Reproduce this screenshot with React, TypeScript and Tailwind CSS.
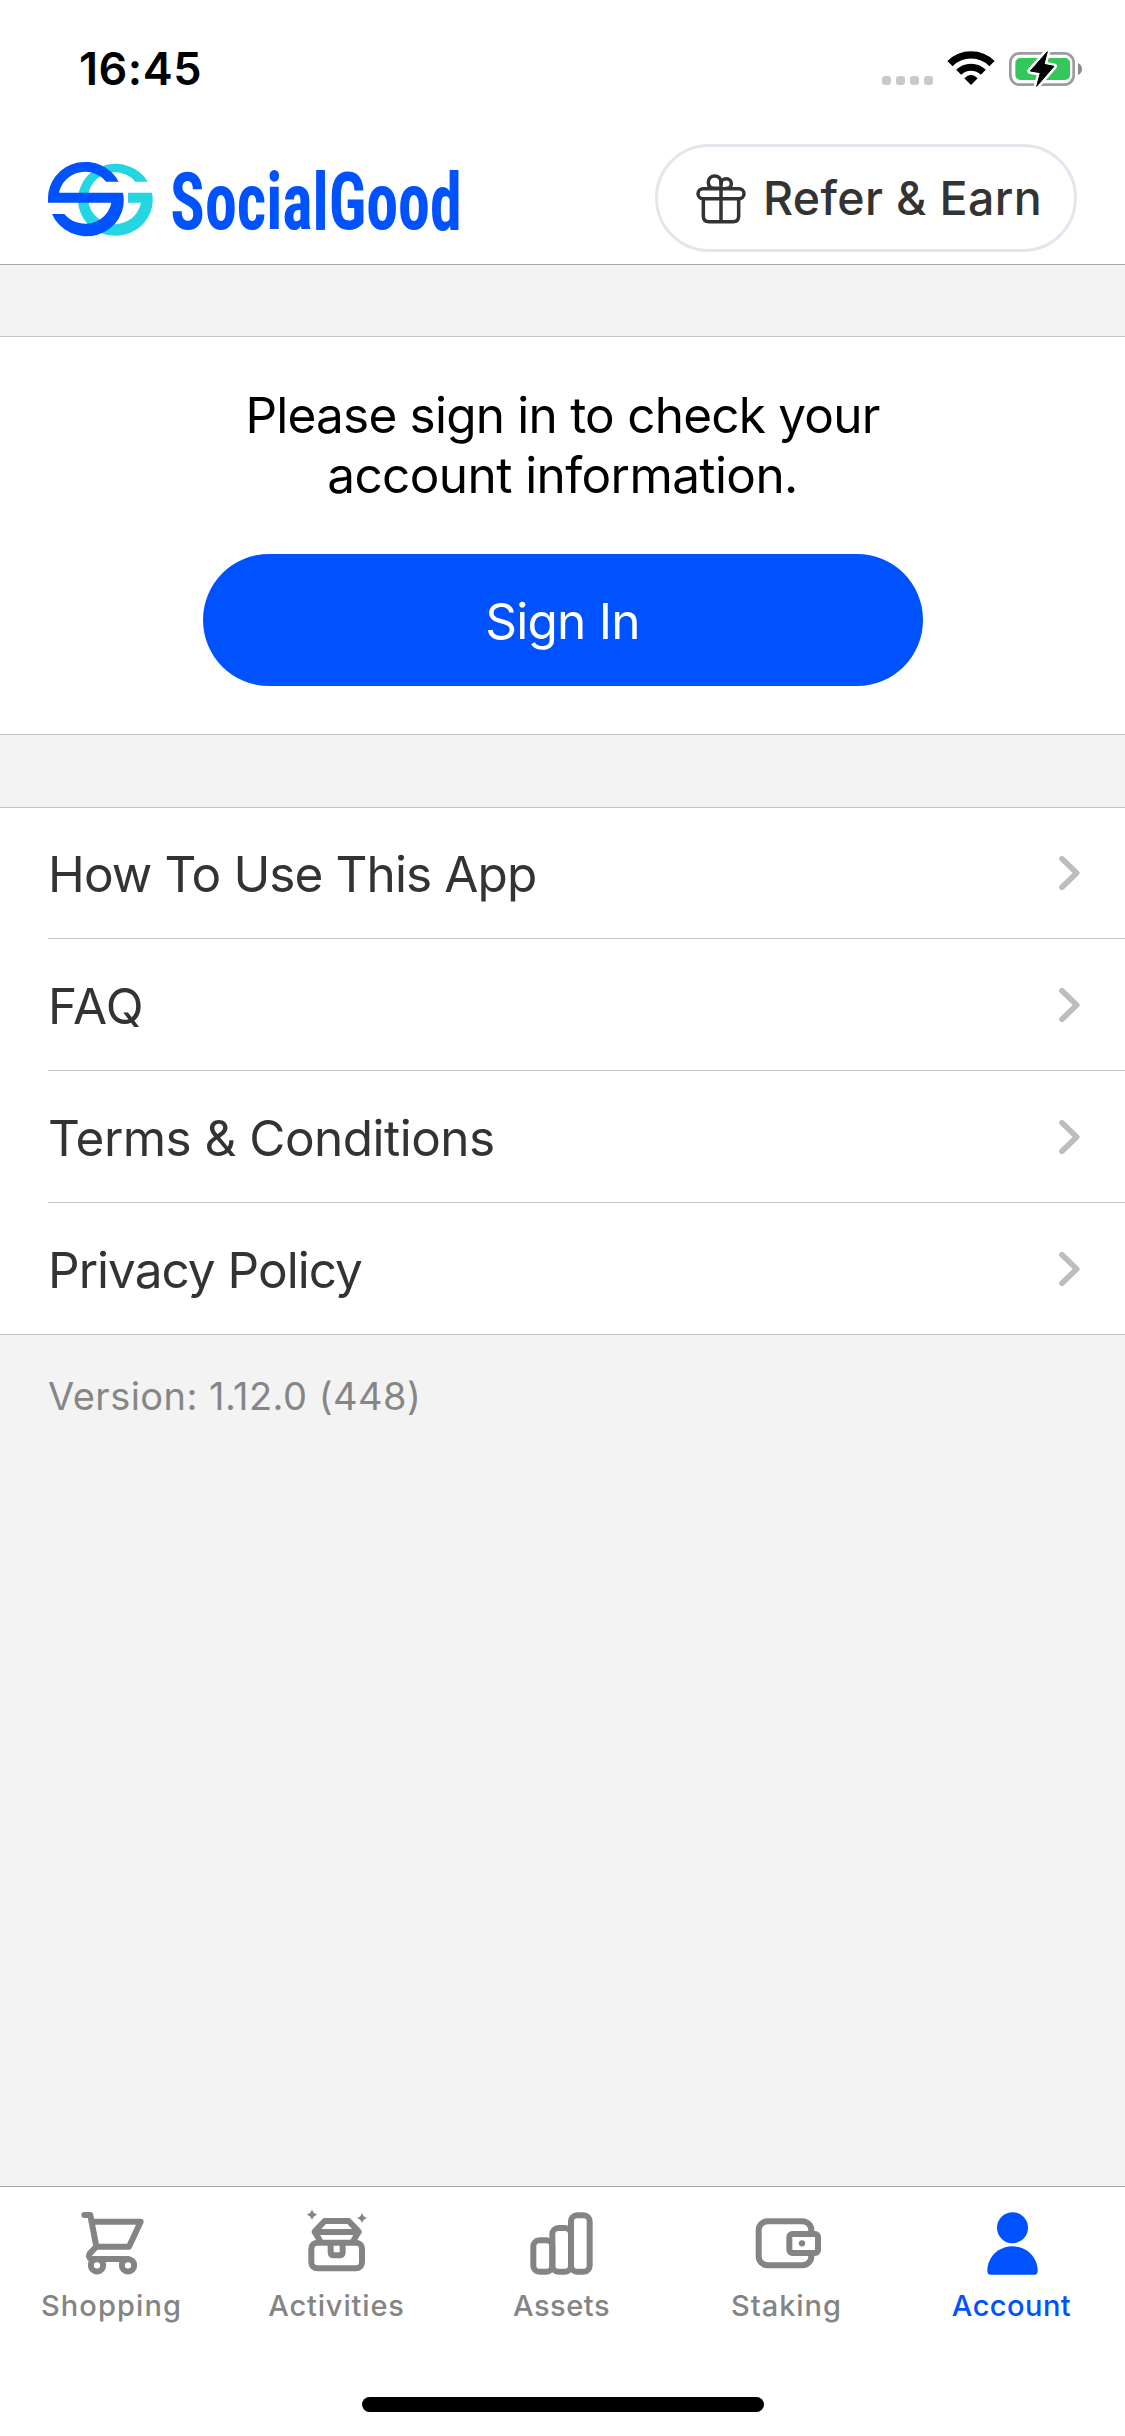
import React from 'react';

function StatusIcons() {
  return (
    <svg viewBox="60 51 615 129" className="w-[205px] h-[43px]">
      {[66, 108, 150, 192].map((x) => (
        <rect key={x} x={x} y="138" width="27" height="27" rx="9" fill="#c9c9c9" />
      ))}
      <path d="M270 101 A89 89 0 0 1 396 101" fill="none" stroke="#000" strokeWidth="22" />
      <path d="M296 127 A52 52 0 0 1 370 127" fill="none" stroke="#000" strokeWidth="21" />
      <path d="M333 165 L313 145 Q333 124 353 145 Z" fill="#000" />
      <rect x="451" y="70" width="190" height="94" rx="28" fill="none" stroke="#9c9c9c" strokeWidth="8" />
      <rect x="466" y="84" width="164" height="66" rx="15" fill="#34c759" />
      <path d="M654 99 Q666 105 666 117 Q666 129 654 135 Z" fill="#8c8c8c" />
      <path
        d="M562 65 L511 123 L541 128 L530 169 L582 109 L552 103 Z"
        fill="#000"
        stroke="#fff"
        strokeWidth="18"
        strokeLinejoin="round"
      />
      <path
        d="M562 65 L511 123 L541 128 L530 169 L582 109 L552 103 Z"
        fill="#000"
        stroke="#000"
        strokeWidth="3"
        strokeLinejoin="round"
      />
    </svg>
  );
}

function Logo() {
  return (
    <svg viewBox="54 60 1245 240" className="w-[415px] h-[80px] mt-1 overflow-visible">
      <path
        d="M353 125 A112 108 0 1 0 366 158 H294 V188 H333 A80 78 0 1 1 316 125 Z"
        fill="#23d6e2"
      />
      <path
        d="M266 125 A112 108 0 0 0 54 174 V188 H244 A80 78 0 0 1 103 222 H66 A112 108 0 0 0 279 158 H87 A80 78 0 0 1 228 125 Z"
        fill="#0052ff"
      />
      <text
        x="421"
        y="266"
        textLength="874"
        lengthAdjust="spacingAndGlyphs"
        fill="#0052ff"
        className="font-['Roboto_Condensed','Roboto',sans-serif] font-bold text-[238px]"
      >
        SocialGood
      </text>
    </svg>
  );
}

function GiftIcon() {
  return (
    <svg
      viewBox="165 120 156 165"
      className="w-[52px] h-[55px]"
      fill="none"
      stroke="#333"
      strokeWidth="10.5"
      strokeLinecap="round"
      strokeLinejoin="round"
    >
      <rect x="174" y="173" width="138" height="30" rx="15" />
      <path d="M190 204 V255 Q190 272 207 272 H279 Q296 272 296 255 V204" />
      <path d="M243 152 V271" />
      <path d="M243 172 H222 C211 172 205 165 205 154 C205 143 213 135 224 135 C236 135 243 143 243 154" />
      <path d="M243 158 C243 149 250 143 259 143 C268 143 274 150 274 158 C274 166 268 172 260 172" />
    </svg>
  );
}

function Chevron() {
  return (
    <svg viewBox="171 160 75 120" className="w-[25px] h-[40px]">
      <path
        d="M186 177 L230 220 L186 263"
        fill="none"
        stroke="#bdbdbd"
        strokeWidth="17"
        strokeLinecap="round"
        strokeLinejoin="round"
      />
    </svg>
  );
}

const stroke = {
  fill: 'none',
  stroke: 'currentColor',
  strokeWidth: 18,
  strokeLinecap: 'round',
  strokeLinejoin: 'round',
} as const;

function CartIcon() {
  return (
    <svg viewBox="225 75 225 225" className="size-[75px]" {...stroke}>
      <path d="M253 105 H271 L289 200" />
      <path d="M275 125 H422 L387 200 H289 L269 221 Q264 229 272 237 H384" />
      <circle cx="291" cy="256" r="18.5" />
      <circle cx="384" cy="256" r="18.5" />
    </svg>
  );
}

function ChestIcon() {
  return (
    <svg viewBox="900 75 225 225" className="size-[75px]" {...stroke}>
      <rect x="934" y="188" width="152" height="77" rx="18" />
      <path d="M992 190 V216 Q992 226 1002 226 H1018 Q1028 226 1028 216 V190" />
      <path d="M960 182 L944 155 L974 123 H1046 L1076 155 L1060 182 M944 156 H1076" />
      <g fill="currentColor" stroke="none">
        <path d="M936 88 Q939 101 952 104 Q939 107 936 120 Q933 107 920 104 Q933 101 936 88 Z" />
        <path d="M1086 98 Q1089 111 1102 114 Q1089 117 1086 130 Q1083 117 1070 114 Q1083 111 1086 98 Z" />
      </g>
    </svg>
  );
}

function BarsIcon() {
  return (
    <svg viewBox="225 75 225 225" className="size-[75px]" {...stroke}>
      <rect x="250" y="181" width="57" height="94" rx="18" />
      <rect x="307" y="144" width="56" height="131" rx="18" />
      <rect x="363" y="106" width="56" height="169" rx="18" />
    </svg>
  );
}

function WalletIcon() {
  return (
    <svg viewBox="900 75 225 225" className="size-[75px]" {...stroke}>
      <rect x="926" y="124" width="158" height="132" rx="27" />
      <rect x="1018" y="162" width="86" height="57" rx="9" fill="#fff" />
      <circle cx="1056" cy="190" r="9.5" fill="currentColor" stroke="none" />
    </svg>
  );
}

function PersonIcon() {
  return (
    <svg viewBox="285 75 225 225" className="size-[75px]" fill="currentColor">
      <circle cx="397.5" cy="143" r="46.5" />
      <path d="M322 273 C322 231 356 199 397.5 199 S473 231 473 273 Q473 284 463 284 H332 Q322 284 322 273 Z" />
    </svg>
  );
}

const rows = [
  { label: 'How To Use This App', style: 'h-[131px] border-b tracking-[-0.9px]' },
  { label: 'FAQ', style: 'h-[132px] border-b tracking-[0.3px]' },
  { label: 'Terms & Conditions', style: 'h-[132px] border-b tracking-[-0.53px]' },
  { label: 'Privacy Policy', style: 'h-[131px] tracking-[-0.98px]' },
];

const tabs = [
  { label: 'Shopping', Icon: CartIcon, style: 'text-[#848484] tracking-[1.1px]' },
  { label: 'Activities', Icon: ChestIcon, style: 'text-[#848484] tracking-[0.84px]' },
  { label: 'Assets', Icon: BarsIcon, style: 'text-[#848484] tracking-[0.53px]' },
  { label: 'Staking', Icon: WalletIcon, style: 'text-[#848484] tracking-[0.97px]' },
  { label: 'Account', Icon: PersonIcon, style: 'text-[#0052ff] tracking-[0.46px]' },
];

export default function App() {
  return (
    <div className="flex h-[2436px] w-[1125px] flex-col bg-[#f3f3f3] font-['Inter',sans-serif] text-[#333]">
      <header className="h-[265px] shrink-0 border-b border-[#a9a9a9] bg-white">
        <div className="flex h-[132px] items-start justify-between pl-[79px] pr-10">
          <span className="mt-[42px] text-[45px] leading-[54px] font-semibold tracking-[0.5px] text-black">16:45</span>
          <div className="mt-[47px]">
            <StatusIcons />
          </div>
        </div>
        <div className="flex h-[132px] items-center justify-between px-12">
          <Logo />
          <button className="flex h-[108px] w-[422px] items-center gap-4 rounded-full border-[3px] border-[#e5e5ed] pl-[37px]">
            <GiftIcon />
            <span className="text-[46.5px] leading-[60px] font-medium tracking-[0.36px] whitespace-nowrap">
              Refer &amp; Earn
            </span>
          </button>
        </div>
      </header>

      <section className="mt-[71px] flex h-[399px] shrink-0 flex-col items-center border-y border-[#c4c4c4] bg-white pt-12">
        <p className="text-center text-[49.5px] leading-[60px] text-black">
          <span className="tracking-[-0.78px]">Please sign in to check your</span>
          <br />
          <span className="tracking-[-0.59px]">account information.</span>
        </p>
        <button className="mt-[49px] h-[132px] w-[720px] rounded-full bg-[#0052ff] pt-0.5 text-[49.5px] tracking-[-0.76px] text-white">
          Sign In
        </button>
      </section>

      <nav className="mt-[72px] flex shrink-0 flex-col border-y border-[#c4c4c4] bg-white">
        {rows.map(({ label, style }) => (
          <a key={label} className={'ml-12 flex items-center justify-between border-[#c4c4c4] pr-[43px] ' + style}>
            <span className="pt-0.5 text-[49.5px] leading-[60px]">{label}</span>
            <Chevron />
          </a>
        ))}
      </nav>

      <p className="mt-[37px] pl-12 text-[38px] leading-[48px] tracking-[0.46px] text-[#868686]">
        Version: 1.12.0 (448)
      </p>

      <footer className="mt-auto flex h-[250px] shrink-0 flex-col items-center border-t border-[#a9a9a9] bg-white">
        <div className="grid w-full grid-cols-5">
          {tabs.map(({ label, Icon, style }) => (
            <div key={label} className={'flex flex-col items-center pt-[18px] ' + style}>
              <Icon />
              <span className="mt-2 pr-0.5 text-[29px] leading-9 font-medium">{label}</span>
            </div>
          ))}
        </div>
        <div className="mt-[73px] h-[15px] w-[402px] rounded-full bg-black" />
      </footer>
    </div>
  );
}
